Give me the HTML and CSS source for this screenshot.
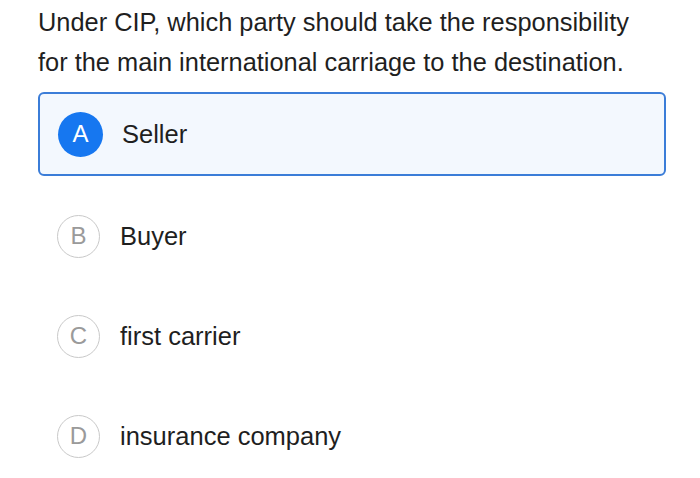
FILE: index.html
```html
<!DOCTYPE html>
<html>
<head>
<meta charset="utf-8">
<link rel="stylesheet" href="styles.css">
</head>
<body>
<div class="quiz">
  <p class="question">Under CIP, which party should take the responsibility for the main international carriage to the destination.</p>
  <div class="options">
    <div class="option selected"><span class="badge">A</span><span class="label">Seller</span></div>
    <div class="option"><span class="badge">B</span><span class="label">Buyer</span></div>
    <div class="option"><span class="badge">C</span><span class="label">first carrier</span></div>
    <div class="option"><span class="badge">D</span><span class="label">insurance company</span></div>
  </div>
</div>
</body>
</html>
```

FILE: styles.css
```css
html, body {
  margin: 0;
  padding: 0;
  background: #ffffff;
}
body {
  font-family: "Liberation Sans", Arial, sans-serif;
  color: #1f1f1f;
  width: 700px;
  height: 478px;
  overflow: hidden;
}
.quiz {
  padding: 2px 35px 0 38px;
}
.question {
  margin: 0;
  max-width: 605px;
  font-size: 25.4px;
  line-height: 40px;
}
.options {
  margin-top: 10px;
  display: flex;
  flex-direction: column;
}
.option {
  display: flex;
  align-items: center;
  height: 100px;
  padding-left: 19px;
  gap: 20px;
}
.option.selected {
  height: 84px;
  box-sizing: border-box;
  width: 628px;
  border: 2px solid #3b7dd8;
  border-radius: 6px;
  background: #f3f8fe;
  padding-left: 18px;
  gap: 19px;
  margin-bottom: 10px;
}
.badge {
  width: 43px;
  height: 43px;
  box-sizing: border-box;
  border: 1.5px solid #c9c9c9;
  border-radius: 50%;
  display: flex;
  align-items: center;
  justify-content: center;
  font-size: 24px;
  color: #9a9a9a;
  flex-shrink: 0;
}
.selected .badge {
  width: 45px;
  height: 45px;
  border: none;
  background: #1677f0;
  color: #ffffff;
}
.label {
  font-size: 25.5px;
  color: #1f1f1f;
}
```
